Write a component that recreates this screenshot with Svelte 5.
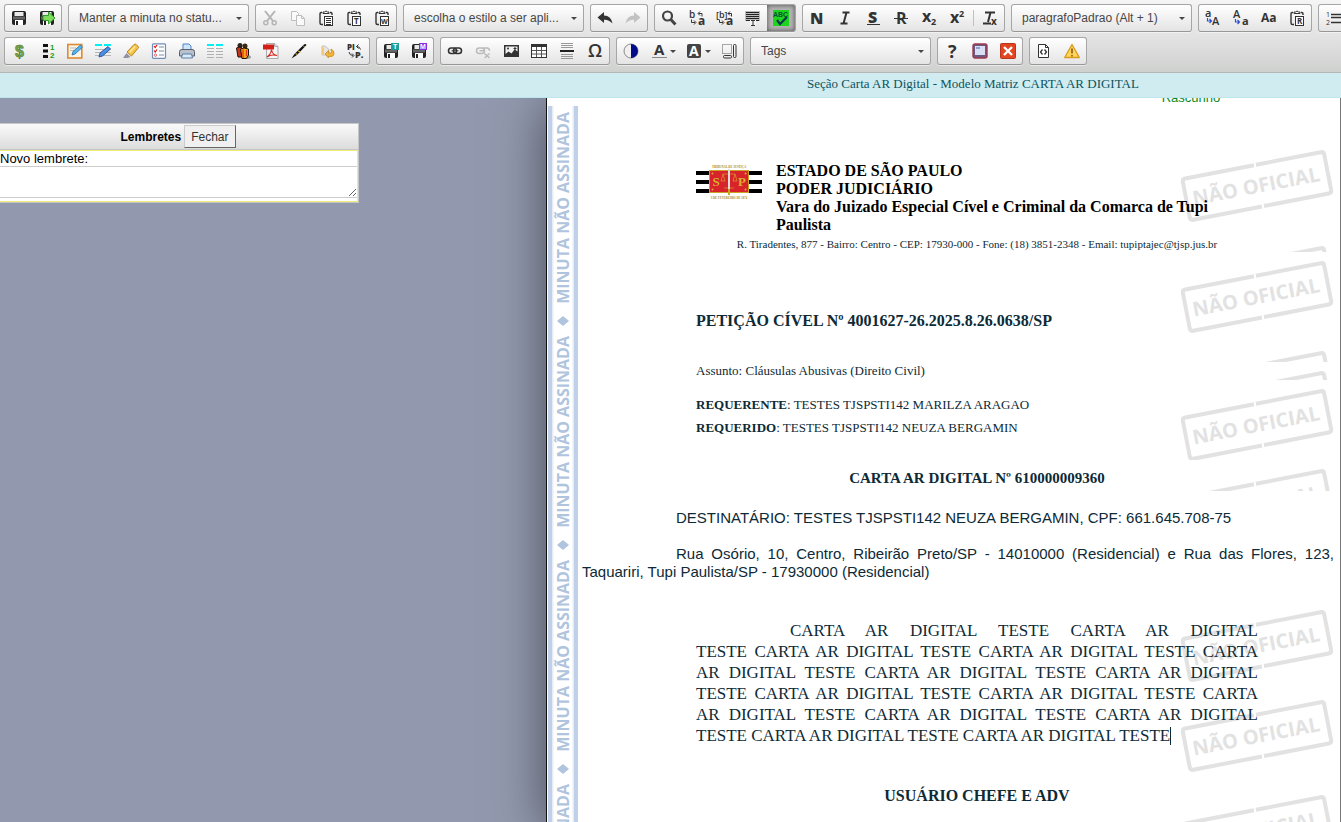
<script>
  const floppy = `<rect x="1" y="1" width="14" height="14" rx="2" fill="#222"/><rect x="3.500" y="2" width="9" height="4" fill="#e9e9e9"/><rect x="2" y="6.500" width="12" height="3" fill="#666"/><rect x="4" y="10" width="8" height="5" fill="#fff"/><rect x="5" y="11" width="2" height="4" fill="#222"/>`;
  const clip = `<path d="M4 2.500H3.200Q2 2.500 2 3.700V13Q2 14.500 3.500 14.500H5M12 2.500h.8q1.200 0 1.200 1.200V5" fill="none" stroke="#333" stroke-width="1.400"/><path d="M5 3.500V2h1.500q1.500-2 3 0H11v1.500z" fill="#fff" stroke="#333"/><rect x="6.500" y="6.500" width="8" height="9" fill="#fff" stroke="#333"/>`;
  const t = (s, x, y, size, extra = '') =>
    `<text x="${x}" y="${y}" font-size="${size}" font-family="Open Sans, sans-serif" fill="#333" ${extra}>${s}</text>`;
  const lines = (ys, x = 1, w = 14, c = '#aaa') => ys.map((y) => `<rect x="${x}" y="${y}" width="${w}" height="1" fill="${c}"/>`).join('');

  const icons = {
    save: floppy,
    saveExit: floppy + `<path d="M4 5.500h5.500V2L16 8l-6.500 6v-3.500H4z" fill="#7ddc5c" stroke="#2f9a2a"/>`,
    cut: `<g fill="none" stroke="#b4b4b4" stroke-width="2"><path d="M3 1l8 10M13 1L5 11"/><circle cx="3.800" cy="12.800" r="2" stroke-width="1.500"/><circle cx="12.200" cy="12.800" r="2" stroke-width="1.500"/></g>`,
    copy: `<g fill="#fafafa" stroke="#bdbdbd"><path d="M1.500 1.500h5l2 2v7h-7z"/><path d="M6.500 5.500h5l3 3v7h-8z"/><path d="M11.500 5.500v3h3" fill="none"/></g>`,
    paste: clip + lines([8, 10, 12, 14], 8, 5, '#333'),
    pasteText: clip + t('T', 8, 14, 8, 'font-weight="700"'),
    pasteWord: clip + t('W', 7, 14, 7, 'font-weight="700"'),
    undo: `<path d="M.5 7.500L7 2v3.500q7 0 8.500 8Q12 9.500 7 9.700V13z" fill="#333"/>`,
    redo: `<path d="M15.500 7.500L9 2v3.500q-7 0-8.500 8Q4 9.500 9 9.700V13z" fill="#c2c2c2"/>`,
    find: `<circle cx="6.500" cy="6" r="4.500" fill="none" stroke="#444" stroke-width="2.200"/><path d="M9.800 9.500l4.700 5" stroke="#444" stroke-width="3"/>`,
    replace: t('b', 0, 8, 10, 'font-weight="600"') + t('a', 9, 15, 12, 'font-weight="700"') + `<path d="M9.500 3.500h3.500v3M11 1.500l-2 2 2 2M2.500 9.500v3H6M5 10.500l2 2-2 2" fill="none" stroke="#333"/>`,
    replaceAll: t('[b]', -1, 8, 9, 'font-weight="600"') + t('a', 9, 15, 12, 'font-weight="700"') + `<path d="M11 3.500h3.500v3M13 1.500l-2 2 2 2M2.500 9.500v3H6M5 10.500l2 2-2 2" fill="none" stroke="#333"/>`,
    selectAll: `<rect x="0" y="1" width="15" height="10" fill="#bbb"/>` + lines([2, 4, 6, 8, 10], 1, 13, '#222') + `<rect x="5" y="10" width="6" height="6" fill="#f4f4f4"/><path d="M6 10.500h4M8 10.500v5M6 15.500h4" stroke="#333"/>`,
    spell: `<rect width="16" height="16" fill="#1fd41f"/><text x="0" y="7" font-size="7" font-weight="700" font-family="Liberation Sans, sans-serif" fill="#053">ABC</text><path d="M4 10l3 4 7-7" fill="none" stroke="#0b3b4d" stroke-width="2.200"/>`,
    bold: t('N', 1, 14, 16, 'font-weight="800"'),
    italic: `<path d="M5.500 2.500h7M3.500 13.500h7M9.500 2.500l-3 11" fill="none" stroke="#333" stroke-width="2"/>`,
    underline: t('S', 3, 13, 16, 'font-weight="800"') + `<rect x="2" y="14" width="13" height="1" fill="#333"/>`,
    strike: t('R', 3, 14, 16, 'font-weight="700"') + `<rect x="1" y="8" width="14" height="1" fill="#333"/>`,
    sub: t('x', 1, 12, 16, 'font-weight="700"') + t('2', 10, 15, 9, 'font-weight="700"'),
    sup: t('x', 1, 13, 16, 'font-weight="700"') + t('2', 10, 7, 9, 'font-weight="700"'),
    clear: `<path d="M3 2.500h10M8.500 2.500L6 12M1 13.500h8" fill="none" stroke="#333" stroke-width="2"/>` + t('x', 9, 15, 10, 'font-weight="700"'),
    upper: t('a', 0, 7, 11, 'font-weight="600"') + t('A', 7, 15, 11, 'font-weight="600"') + `<path d="M2.500 8v3H6M4.500 9l2 2-2 2" fill="none" stroke="#2a53d0" stroke-width="1.200"/>`,
    lower: t('A', 0, 8, 11, 'font-weight="600"') + t('a', 9, 15, 11, 'font-weight="700"') + `<path d="M2.500 9v3H6M4.500 10l2 2-2 2" fill="none" stroke="#2a53d0" stroke-width="1.200"/>`,
    caps: t('Aa', 0, 12, 12, 'font-weight="700"'),
    clipR: clip + t('R', 8, 14, 8, 'font-weight="700"'),
    list: t('1', 1, 7, 7) + t('2', 1, 15, 7) + `<path d="M6 4.500h10M6 7.500h10M6 12.500h10" stroke="#333" stroke-width="1.300"/>`,
    bullets: `<path d="M6 4.500h10M6 8.500h10M6 12.500h10" stroke="#333"/>`,
    money: `<text x="4" y="14" font-size="16" font-weight="700" font-family="Liberation Sans, sans-serif" fill="#7fa650" stroke="#4c7a2d" stroke-width=".6">$</text>`,
    numbering: `<g fill="#111"><rect x="4" y="1" width="5" height="3"/><rect x="4" y="6.500" width="5" height="3"/><rect x="4" y="12" width="5" height="3"/></g><text x="11" y="7" font-size="8" font-weight="700" font-family="Liberation Sans, sans-serif" fill="#14a014">1</text><text x="11" y="15" font-size="8" font-weight="700" font-family="Liberation Sans, sans-serif" fill="#14a014">2</text>`,
    note: `<rect x=".8" y="1.500" width="14" height="13.500" fill="#fbf3e4" stroke="#dd8a35" stroke-width="1.600"/><path d="M3 5h6M3 7.500h5" stroke="#bbb"/><path d="M5 12l1-3.500 7.500-6.500 2 2.300L8 11z" fill="#57b4ea" stroke="#1f6fae" stroke-width=".8"/>`,
    fields: `<rect x="0" y="1" width="7" height="2" fill="#00f0f5"/><rect x="9" y="1" width="7" height="2" fill="#00f0f5"/>` + lines([6, 9, 12], 0, 16, '#b5b5b5') + `<path d="M4 14l1-4L13 3.500l2.500 2.500-8 7z" fill="#4a8fe0" stroke="#2a4d9a" stroke-width=".9"/>`,
    marker: `<path d="M0 15l3.500-5 4 4-3 1z" fill="#8d93a0"/><path d="M4 9L11 1.500q1-1 2.500.3l1.500 1.500q1 1 0 2L8.500 13z" fill="#f6c546" stroke="#b98420"/><path d="M6.500 9.500L12 3.500" stroke="#fdeaa6" stroke-width="1.500"/>`,
    checklist: `<rect x="1.500" y=".8" width="13" height="14.500" rx="1" fill="#fff" stroke="#6f8cb5" stroke-width="1.200"/><path d="M3 3l1.200 1.500L6 2M3 7.500L4.200 9 6 6.500" fill="none" stroke="#d11" stroke-width="1.200"/><circle cx="4.500" cy="12.200" r="1.200" fill="none" stroke="#d66"/><path d="M8 4h5M8 8h5M8 12h5" stroke="#7a8ba5"/>`,
    print: `<path d="M4 7V1h6l2 2v4" fill="#cfe5fb" stroke="#4c86c6"/><path d="M.5 8.500Q.5 6.500 3 6.500h10q2.500 0 2.500 2V13H.5z" fill="#b9c0c9" stroke="#59616c"/><path d="M3.500 11h9l1 4h-11z" fill="#d9ebfa" stroke="#5b7fa8"/>`,
    columns: `<rect x="0" y="1" width="7" height="2" fill="#00f0f5"/><rect x="9" y="1" width="7" height="2" fill="#00f0f5"/>` + lines([5, 8, 11, 14], 0, 7, '#b0b0b0') + lines([5, 8, 11, 14], 9, 7, '#b0b0b0'),
    people: `<ellipse cx="11" cy="14" rx="5" ry="2" fill="#999"/><circle cx="5" cy="2.500" r="2.500" fill="#2a2320"/><circle cx="10" cy="3" r="2.500" fill="#3a2a14"/><path d="M1.500 5q2-1.500 5-.5V14H3z" fill="#c8341c" stroke="#1c1208"/><path d="M5.500 6q3-2 8 0v6l-2 3.500H7z" fill="#f3a81a" stroke="#1c1208"/><path d="M8 6.500V15M11.500 7v6" stroke="#e03a12" stroke-width="1.300"/>`,
    pdf: `<path d="M3.500.5h8l3.500 3v12H3.500z" fill="#f4f4f4" stroke="#aaa"/><path d="M11.500.5v3H15" fill="#ddd" stroke="#aaa"/><rect x="0" y="1.500" width="11" height="5" fill="#d41f16"/><path d="M4 14q4-3 4.500-7.500Q9.500 12 14 12.500 8 11 4 14z" fill="none" stroke="#d8281e" stroke-width="1.100"/>`,
    pen: `<path d="M.5 15.500l3-4.500L13 1.500q1.500-1 2.500.5L6 12z" fill="#111"/><path d="M7 8l2.500 1M4.500 10.500l2 1" stroke="#d9b43a" stroke-width="1.200"/><path d="M12 2.500l1.500 1.500" stroke="#cfc070"/>`,
    transfer: `<path d="M3 3h3l4 3.500V12H3z" fill="#e6e6e6" stroke="#c2c2c2"/><path d="M3 3v9l2-1V5z" fill="#f6c873"/><path d="M6 11l3.500-3.500V10h2.500q1.500-1 0-2.500V6q3.500 1.500 3 5-.5 2.500-3 2.500H9.500V15z" fill="#f3b43a" stroke="#c98a1f" stroke-width=".8"/>`,
    piece: t('PI', 0, 7, 8, 'font-weight="800"') + t('P.', 8, 15, 9, 'font-weight="800"') + `<path d="M9.500 3.500q3.500 0 4 3M11.500 1.500l-2 2 2 2M2 9q.5 3.500 4 3.500M5 10.500l2 2-2 2" fill="none" stroke="#333"/>`,
    saveT: floppy + `<rect x="8" y="0" width="8" height="7" fill="#1d9f98"/><text x="10" y="6" font-size="7" font-weight="700" font-family="Liberation Sans, sans-serif" fill="#fff">T</text>`,
    saveM: floppy + `<rect x="8" y="0" width="8" height="7" fill="#8a2be2"/><text x="9" y="6" font-size="7" font-weight="700" font-family="Liberation Sans, sans-serif" fill="#fff">M</text>`,
    link: `<g fill="none" stroke="#333" stroke-width="1.600"><rect x="1.500" y="5" width="8" height="5.500" rx="2.700"/><rect x="6.500" y="5" width="8" height="5.500" rx="2.700"/></g><path d="M4.500 7.800h7" stroke="#333"/>`,
    unlink: `<g fill="none" stroke="#bbb" stroke-width="1.500"><rect x="1.500" y="5" width="8" height="5.500" rx="2.700"/><path d="M8 5h4q2.500.2 2.500 2.700M4.500 7.800h5M9.500 10.500l5 4.500M14.500 10.500l-5 4.500"/></g>`,
    image: `<rect x="1" y="2" width="15" height="12" fill="#333"/><path d="M2.500 3.500h12v5l-3-2-3 4-3-2-3 2.500z" fill="#f1f1f1"/><circle cx="5" cy="5.500" r="1" fill="#333"/><path d="M12 4v4M10.500 5.500h3" stroke="#333"/>`,
    table: `<rect x=".5" y="1.500" width="15" height="13" fill="#fff" stroke="#333"/><rect x="0" y="1" width="16" height="3" fill="#333"/><path d="M5.500 4v10M10.500 4v10M1 7.500h14M1 11h14" stroke="#555"/>`,
    rule: lines([0, 2, 4, 11, 13, 15], 2, 12, '#999') + `<rect x="1" y="7" width="14" height="2" fill="#222"/>`,
    omega: t('Ω', 1, 14, 18, 'font-weight="600"'),
    contrast: `<circle cx="8" cy="8" r="7" fill="#f0f0f0" stroke="#8a8a8a"/><path d="M8 1a7 7 0 010 14z" fill="#000c8c"/>`,
    color: t('A', 3, 12, 15, 'font-weight="700"') + `<rect x="1" y="14" width="15" height="1" fill="#888"/>`,
    bgcolor: `<rect x="1" y="1" width="14" height="14" rx="2" fill="#444"/><text x="3" y="13" font-size="14" font-weight="700" font-family="Open Sans, sans-serif" fill="#fff">A</text>`,
    blocks: `<rect x="1.500" y="1.500" width="9" height="9" fill="none" stroke="#555" stroke-dasharray="1 1"/><rect x="2.500" y="12.500" width="8" height="2.500" rx="1" fill="none" stroke="#333"/><rect x="12.500" y="1.500" width="2.500" height="13" rx="1" fill="none" stroke="#333"/>`,
    help: t('?', 4, 15, 18, 'font-weight="700"'),
    screen: `<rect x="1" y="1" width="14" height="14" rx="2" fill="#6a5a80" stroke="#a0384c" stroke-width="1.400"/><rect x="3" y="3" width="10" height="9" fill="#d9dff5"/><rect x="4" y="4" width="4" height="2" fill="#8f9fd2"/>`,
    close: `<rect x=".5" y=".5" width="15" height="15" rx="1" fill="#e2451f" stroke="#b5381c"/><path d="M4 4l8 8M12 4l-8 8" stroke="#fff" stroke-width="2.400"/>`,
    source: `<path d="M2.500 1.500h7l3 3v10h-10z" fill="#fff" stroke="#333"/><path d="M9.500 1.500v3h3" fill="none" stroke="#333"/><path d="M6.500 6.500L4.500 9l2 2.500M8.500 6.500l2 2.500-2 2.500" fill="none" stroke="#333" stroke-width="1.300"/>`,
    warn: `<path d="M8 1.500l7.300 13H.7z" fill="#ffd65c" stroke="#d99a1c" stroke-linejoin="round" stroke-width="1.300"/><path d="M8 5.500v5M8 12v1.500" stroke="#8a5a10" stroke-width="1.600"/>`
  };

  const b = (icon, label, opts = {}) => ({ icon, label, ...opts });
  const rows = [
    [
      { items: [b('save', 'Salvar'), b('saveExit', 'Salvar e sair')] },
      { combo: 'Manter a minuta no statu...', label: 'Status da minuta' },
      { items: [b('cut', 'Recortar'), b('copy', 'Copiar'), b('paste', 'Colar'), b('pasteText', 'Colar como texto'), b('pasteWord', 'Colar do Word')] },
      { combo: 'escolha o estilo a ser apli...', label: 'Estilo' },
      { items: [b('undo', 'Desfazer'), b('redo', 'Refazer')] },
      { items: [b('find', 'Localizar'), b('replace', 'Substituir'), b('replaceAll', 'Substituir campos'), b('selectAll', 'Selecionar tudo'), b('spell', 'Verificar ortografia', { on: true })] },
      { items: [b('bold', 'Negrito'), b('italic', 'Itálico'), b('underline', 'Sublinhado'), b('strike', 'Riscado'), b('sub', 'Subscrito'), b('sup', 'Sobrescrito'), b('clear', 'Remover formatação', { sep: true })] },
      { combo: 'paragrafoPadrao (Alt + 1)', label: 'Formatação' },
      { items: [b('upper', 'Maiúsculas'), b('lower', 'Minúsculas'), b('caps', 'Iniciais maiúsculas'), b('clipR', 'Colar referência')] },
      { items: [b('list', 'Lista numerada'), b('bullets', 'Lista')] }
    ],
    [
      { items: [b('money', 'Valores'), b('numbering', 'Numeração'), b('note', 'Editar nota'), b('fields', 'Editar campos'), b('marker', 'Marca-texto'), b('checklist', 'Lista de verificação'), b('print', 'Imprimir'), b('columns', 'Colunas'), b('people', 'Partes'), b('pdf', 'Gerar PDF'), b('pen', 'Assinar'), b('transfer', 'Transferir'), b('piece', 'Trocar peça')] },
      { items: [b('saveT', 'Salvar texto'), b('saveM', 'Salvar modelo')] },
      { items: [b('link', 'Link'), b('unlink', 'Remover link'), b('image', 'Imagem'), b('table', 'Tabela'), b('rule', 'Linha horizontal'), b('omega', 'Caractere especial')] },
      { items: [b('contrast', 'Contraste'), b('color', 'Cor do texto', { drop: true }), b('bgcolor', 'Cor do fundo', { drop: true }), b('blocks', 'Mostrar blocos')] },
      { combo: 'Tags', label: 'Tags' },
      { items: [b('help', 'Ajuda'), b('screen', 'Tela cheia'), b('close', 'Fechar editor')] },
      { items: [b('source', 'Código-fonte'), b('warn', 'Avisos')] }
    ]
  ];

  // "AR DIGITAL" is kept on one line throughout the letter's text.
  const phrase = 'CARTA AR\u00a0DIGITAL TESTE';
  const letterText = `${phrase} ${phrase}\u00a0${Array(12).fill(phrase).join(' ')}`;
</script>

{#snippet stamps(count)}
  <div class="stamps" aria-hidden="true">
    {#each Array(count) as _}
      <svg class="stamp" width="156" height="90" viewBox="0 0 156 90">
        <g transform="rotate(-11 79 45)">
          <path d="M80 24H10q-3 0-3 3v36q0 3 3 3h70M82 24h66q3 0 3 3v36q0 3-3 3H82" fill="none" stroke="#e2e2e2" stroke-width="4" />
          <text x="78" y="52" text-anchor="middle" font-family="Open Sans, sans-serif" font-weight="700" font-size="20" fill="#e2e2e2">NÃO OFICIAL</text>
        </g>
      </svg>
    {/each}
  </div>
{/snippet}

<div class="app">
  <header class="toolbox">
    {#each rows as row}
      <div class="row" role="toolbar">
        {#each row as group}
          {#if group.combo}
            <div class="group combo">
              <select aria-label={group.label}><option>{group.combo}</option></select>
            </div>
          {:else}
            <div class="group">
              {#each group.items as item}
                {#if item.sep}<span class="sep"></span>{/if}
                <button class="tool" class:on={item.on} class:drop={item.drop} aria-label={item.label} title={item.label}>
                  <svg width="16" height="16" viewBox="0 0 16 16">{@html icons[item.icon]}</svg>
                </button>
              {/each}
            </div>
          {/if}
        {/each}
      </div>
    {/each}
  </header>

  <div class="notice">Seção Carta AR Digital - Modelo Matriz CARTA AR DIGITAL</div>

  <main>
    <aside>
      <section class="reminders">
        <div class="head"><strong>Lembretes</strong><button>Fechar</button></div>
        <div class="entry">
          <label for="reminder">Novo lembrete:</label>
          <textarea id="reminder"></textarea>
        </div>
      </section>
    </aside>

    <article>
      <div class="band">
        {#each Array(4) as _}
          <div class="tile">
            <span>MINUTA NÃO ASSINADA</span>
            <svg width="12" height="10" viewBox="0 0 12 10"><path d="M0 5l6-5 6 5-6 5z" fill="#b0c4de" /></svg>
          </div>
        {/each}
      </div>

      <div class="sheet">
        <p class="draft">Rascunho</p>

        <section class="block court">
          {@render stamps(1)}
          <svg class="crest" width="66" height="36" viewBox="0 0 66 36">
            <path d="M0 8h66M0 17h66M0 26h66" stroke="#000" stroke-width="4" />
            <rect x="13.500" y="5.500" width="39" height="22" fill="#d8232a" stroke="#c9a227" />
            <g fill="#d9b02c" font-family="Liberation Serif, serif" text-anchor="middle">
              <text x="20" y="21" font-size="13" font-weight="700">S</text>
              <text x="46" y="21" font-size="13" font-weight="700">P</text>
              <text x="33" y="3" font-size="3" font-weight="700" fill="#a88c1c">TRIBUNAL DE JUSTIÇA</text>
              <text x="33" y="34" font-size="3" font-weight="700" fill="#a88c1c">3 DE FEVEREIRO DE 1874</text>
              <circle cx="16.500" cy="8.500" r="1" /><circle cx="49.500" cy="8.500" r="1" /><circle cx="16.500" cy="24.500" r="1" /><circle cx="49.500" cy="24.500" r="1" />
            </g>
            <path d="M27 9h12M27 9l-2 7h4zM39 9l-2 7h4zM28 23h10" fill="none" stroke="#d9902c" stroke-width=".8" />
            <path d="M33 4v20" stroke="#ddd" stroke-width="2" />
            <path d="M33 24v6" stroke="#c9a227" stroke-width="2" />
          </svg>
          <h1>ESTADO DE SÃO PAULO<br />PODER JUDICIÁRIO<br />Vara do Juizado Especial Cível e Criminal da Comarca de Tupi Paulista</h1>
        </section>

        <section class="block address">
          {@render stamps(1)}
          <p>R. Tiradentes, 877 - Bairro: Centro - CEP: 17930-000 - Fone: (18) 3851-2348 - Email: tupiptajec@tjsp.jus.br</p>
        </section>

        <section class="block case">
          {@render stamps(1)}
          <h2>PETIÇÃO CÍVEL Nº 4001627-26.2025.8.26.0638/SP</h2>
        </section>

        <section class="block blank">{@render stamps(1)}</section>

        <section class="block subject">
          {@render stamps(1)}
          <p>Assunto: Cláusulas Abusivas (Direito Civil)</p>
        </section>

        <section class="block parties">
          {@render stamps(1)}
          <p><strong>REQUERENTE</strong>: TESTES TJSPSTI142 MARILZA ARAGAO</p>
          <p><strong>REQUERIDO</strong>: TESTES TJSPSTI142 NEUZA BERGAMIN</p>
        </section>

        <section class="block letter">
          {@render stamps(1)}
          <h3>CARTA AR DIGITAL Nº 610000009360</h3>
        </section>

        <section class="recipient">
          <p>DESTINATÁRIO: TESTES TJSPSTI142 NEUZA BERGAMIN, CPF: 661.645.708-75</p>
          <p>Rua Osório, 10, Centro, Ribeirão Preto/SP - 14010000 (Residencial) e Rua das Flores, 123, Taquariri, Tupi Paulista/SP - 17930000 (Residencial)</p>
        </section>

        <section class="block body">
          {@render stamps(2)}
          <p>{letterText}<span class="caret"></span></p>
        </section>

        <section class="block sign">
          {@render stamps(1)}
          <h2>USUÁRIO CHEFE E ADV</h2>
        </section>
      </div>
    </article>
  </main>
</div>

<style>
  :global(body) { margin: 0; }
  .app {
    display: flex;
    flex-direction: column;
    height: 100vh;
    overflow: hidden;
    font-family: "Liberation Sans", Arial, sans-serif;
    font-size: 12px;
  }
  h1, h2, h3, p { margin: 0; }
  .toolbox {
    flex: none;
    padding: 4px 0 2px 4px;
    border-bottom: 1px solid #b6b6b6;
    background: linear-gradient(#f5f5f5, #cfd1cf);
    overflow: hidden;
  }
  .row { display: flex; gap: 6px; margin-bottom: 5px; }
  .group {
    flex: none;
    box-sizing: border-box;
    display: flex;
    height: 28px;
    border: 1px solid #a6a6a6;
    border-bottom-color: #979797;
    border-radius: 3px;
    background: linear-gradient(#fff, #e4e4e4);
    box-shadow: 0 1px 0 rgba(255, 255, 255, 0.5);
    overflow: hidden;
  }
  .tool {
    display: flex;
    align-items: center;
    gap: 3px;
    width: 28px;
    height: 26px;
    padding: 0 6px;
    border: 0;
    background: none;
  }
  .tool svg { flex: none; overflow: visible; }
  .tool.on { background: #b5b5b5; box-shadow: 0 0 5px rgba(0, 0, 0, 0.6) inset; }
  .tool.drop { width: 35px; }
  .tool.drop::after, .combo::after {
    content: "";
    flex: none;
    border: 3px solid transparent;
    border-top-color: #474747;
    border-bottom: 0;
  }
  .sep { width: 1px; margin: 5px 2px; background: #c0c0c0; }
  .combo { width: 181px; position: relative; }
  .combo::after { position: absolute; right: 6px; top: 12px; pointer-events: none; }
  select {
    appearance: none;
    width: 100%;
    padding: 0 20px 0 10px;
    border: 0;
    background: none;
    color: #474747;
    font: 12px "Liberation Sans", Arial, sans-serif;
  }
  .notice {
    flex: none;
    padding: 1px 0 3px 605px;
    border-bottom: 1px solid #bee5eb;
    background: #d1ecf1;
    color: #0c5460;
    font: 13px/20px "Liberation Serif", "Times New Roman", serif;
    text-align: center;
  }
  main {
    flex: 1;
    min-height: 0;
    display: flex;
    background: #9299ae;
    overflow: hidden;
  }
  aside { flex: 0 0 546px; }
  .reminders {
    width: 359px;
    margin-top: 25px;
    border: 1px solid #c6c6c6;
    border-left: 0;
    background: #fff;
    box-sizing: border-box;
    font-size: 12px;
  }
  .head {
    display: flex;
    justify-content: center;
    align-items: center;
    gap: 3px;
    height: 25px;
    padding-right: 2px;
    border-bottom: 1px solid #c6c6c6;
    background: linear-gradient(#fafafa, #dcdcdc);
    color: #000;
  }
  .head button {
    height: 23px;
    padding: 0 6px;
    border: 1px solid;
    border-color: #ccc #666 #666 #ccc;
    background: #f0f0f0;
    color: #333;
    font: inherit;
  }
  .entry { border: 1px solid #f0ec7a; border-left: 0; }
  .entry label { display: block; font-size: 13px; line-height: 15px; color: #000; }
  textarea {
    display: block;
    box-sizing: border-box;
    width: 100%;
    height: 32px;
    margin-bottom: 3px;
    border: 1px solid #ccc;
    border-width: 1px 0;
    outline: 0;
  }
  article {
    position: relative;
    flex: 1;
    min-width: 0;
    display: flex;
    border-left: 1px solid #111;
    border-right: 1px solid #777;
    background: #fff;
    box-shadow: 0 8px 48px rgba(0, 0, 0, 0.5);
    color: #0d2a36;
    font-family: "Liberation Serif", "Times New Roman", serif;
    overflow: hidden;
  }
  .band {
    flex: none;
    align-self: flex-start;
    box-sizing: border-box;
    width: 30px;
    margin: 8px 0 0 1px;
    border: solid #bfd0e8;
    border-width: 0 4px;
    background: linear-gradient(90deg, #e6ecf5 1px, #fff 2px, #fff 20px, #e6ecf5 21px);
  }
  .tile {
    display: flex;
    flex-direction: column;
    align-items: center;
    justify-content: space-between;
    box-sizing: border-box;
    height: 224px;
    padding: 6px 0 4px;
  }
  .tile span {
    writing-mode: vertical-rl;
    transform: rotate(180deg);
    color: #b0c4de;
    font: 700 16px/22px "Open Sans", sans-serif;
    white-space: nowrap;
  }
  .sheet { flex: 1; min-width: 0; padding: 0 6px 0 4px; }
  .draft {
    width: 286px;
    margin: -8px 0 0 auto;
    padding-bottom: 36px;
    color: #0a8a1a;
    font: 13px/15px "Liberation Sans", Arial, sans-serif;
    text-align: center;
  }
  .block {
    position: relative;
    box-sizing: border-box;
    padding: 0 76px 0 114px;
    overflow: hidden;
  }
  .block > :not(.stamps) { position: relative; }
  .block > .stamps { position: absolute; top: 0; right: 0; }
  .stamp { display: block; }
  .court { display: flex; gap: 14px; min-height: 96px; padding-top: 21px; }
  .crest { flex: none; margin-top: 3px; overflow: visible; }
  h1 { color: #000; font-size: 16px; line-height: 18px; }
  h2 { font-size: 16px; line-height: 20px; }
  h3 { font-size: 15px; line-height: 20px; text-align: center; }
  .address { height: 15px; font-size: 11px; line-height: 14px; text-align: center; white-space: nowrap; }
  .case { height: 90px; padding-top: 59px; }
  .blank { height: 20px; }
  .subject { height: 18px; font-size: 13px; line-height: 18px; }
  .parties { height: 80px; padding-top: 13px; font-size: 13px; line-height: 23px; }
  .letter { height: 31px; padding-top: 8px; }
  .recipient {
    padding: 18px 0 20px;
    font: 15px/18px "Liberation Sans", Arial, sans-serif;
    text-align: justify;
    text-indent: 94px;
  }
  .recipient p + p { margin-top: 18px; }
  .body { height: 185px; padding-top: 19px; font-size: 17px; line-height: 21px; text-align: justify; text-indent: 94px; }
  .caret { display: inline-block; width: 1px; height: 18px; background: #0d2a36; vertical-align: -4px; }
  .sign { height: 90px; text-align: center; }
</style>
